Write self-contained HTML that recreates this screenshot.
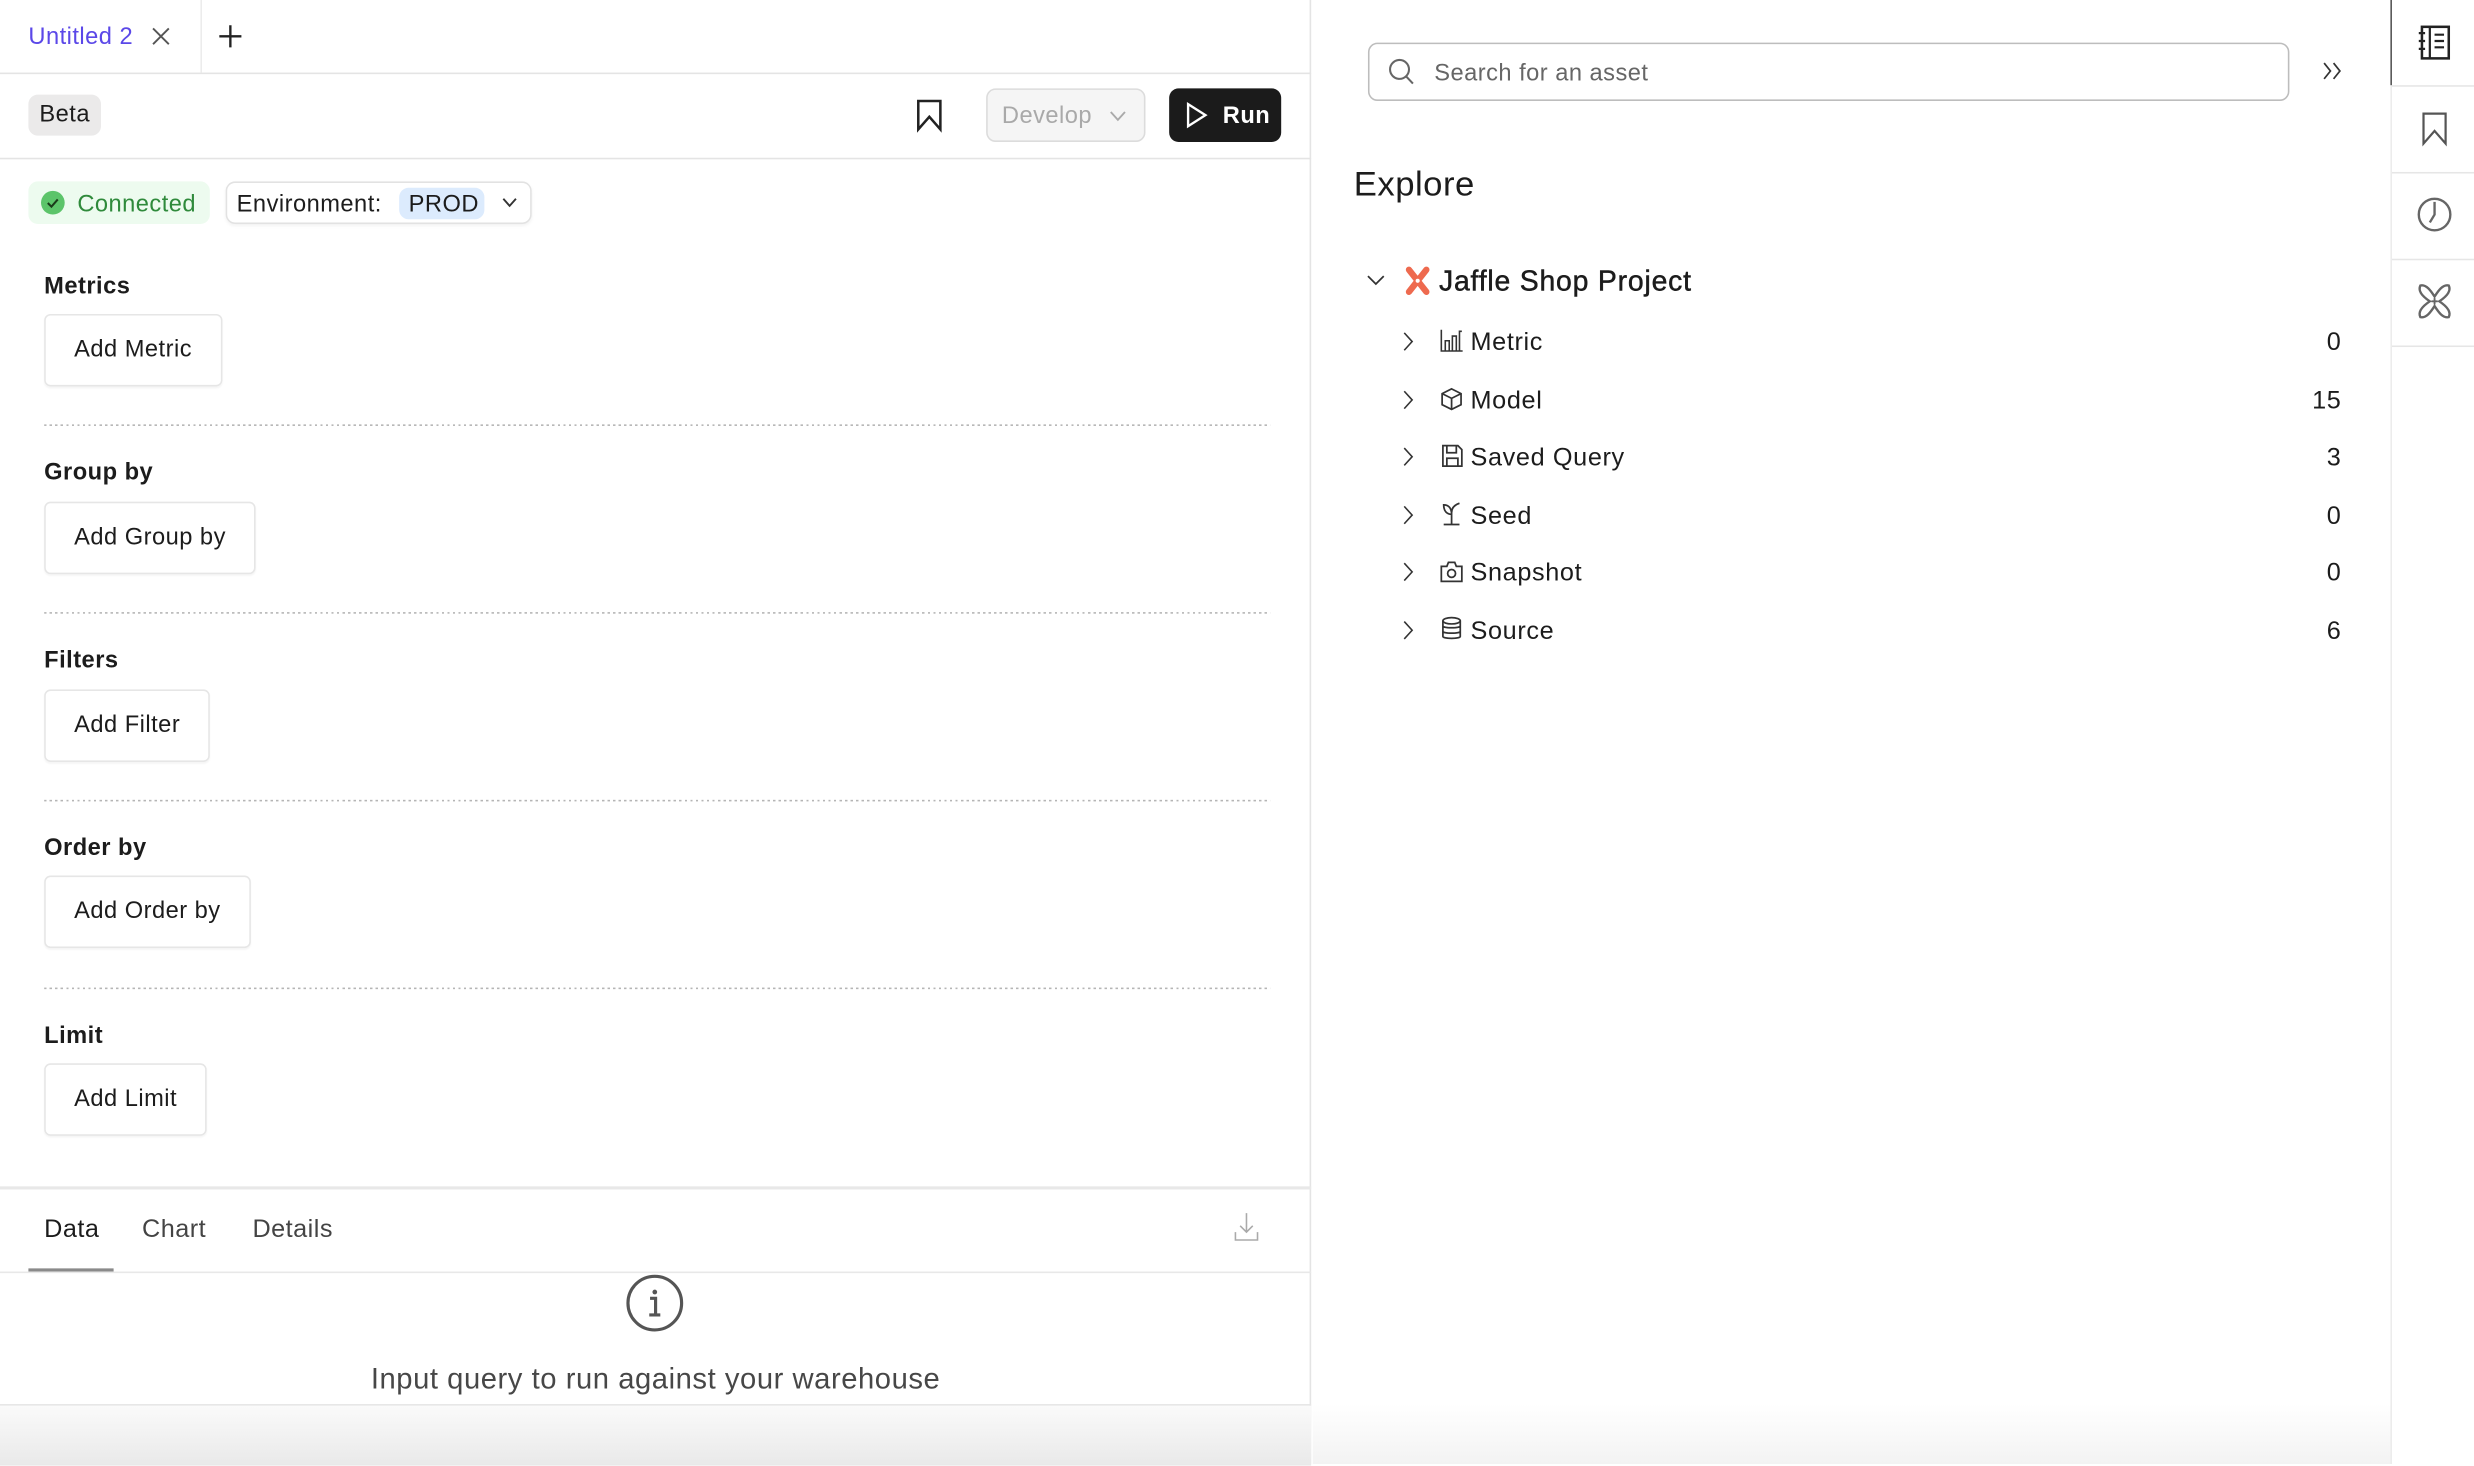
<!DOCTYPE html>
<html><head><meta charset="utf-8"><style>
html,body{margin:0;padding:0;width:2474px;height:1464px;overflow:hidden;background:#fff}
#w{position:absolute;left:0;top:0;width:1568px;height:928px;transform:scale(1.57781,1.57759);transform-origin:0 0;font-family:"Liberation Sans",sans-serif;color:#1c1c1c;letter-spacing:.3px}
.a{position:absolute}
.t{position:absolute;white-space:nowrap;line-height:1}
.btn{position:absolute;left:28px;height:46px;border:1px solid #e6e6e6;border-radius:4px;box-sizing:border-box;font-size:15px;line-height:44px;padding:0 18px;box-shadow:0 1px 1px rgba(0,0,0,.04)}
.lbl{position:absolute;left:28px;font-size:15px;font-weight:bold;line-height:1}
.dot{position:absolute;left:28px;width:777px;height:1px;background:repeating-linear-gradient(90deg,#b5b5b5 0 1.5px,transparent 1.5px 3.5px)}
.row{position:absolute;left:886px;width:598px;height:20px;font-size:16px;letter-spacing:.4px}
.row .n{position:absolute;left:46px;top:2px}
.row .c{position:absolute;right:0;top:2px}
svg{position:absolute;overflow:visible}
</style></head><body><div id="w">
<div class="a" style="left:0;top:0;width:831px;height:928px;border-right:1px solid #e4e4e4;box-sizing:border-box"></div>
<div class="a" style="left:0;top:46px;width:831px;border-top:1px solid #e4e4e4"></div>
<div class="a" style="left:127px;top:0;height:46px;border-left:1px solid #ececec"></div>
<div class="t" style="left:18px;top:16px;font-size:15px;color:#5b48e8">Untitled 2</div>
<svg style="left:97px;top:18px" width="10" height="10"><path d="M0 0L10 10M10 0L0 10" stroke="#555" stroke-width="1.2"/></svg>
<svg style="left:139px;top:16px" width="14" height="14"><path d="M7 0V14M0 7H14" stroke="#222" stroke-width="1.5"/></svg>
<div class="a" style="left:0;top:100px;width:831px;border-top:1px solid #e4e4e4"></div>
<div class="t" style="left:18px;top:60px;width:46px;height:26px;background:#ebeaea;border-radius:6px;font-size:15px;line-height:26px;text-align:center">Beta</div>
<svg style="left:581px;top:63px" width="16" height="20"><path d="M1 1H15V19L8 11L1 19Z" fill="none" stroke="#222" stroke-width="1.6"/></svg>
<div class="a" style="left:625px;top:56px;width:101px;height:34px;border:1px solid #dcdcdc;background:#f5f5f5;border-radius:6px;box-sizing:border-box"></div>
<div class="t" style="left:635px;top:66px;font-size:15px;color:#a9a9a9">Develop</div>
<svg style="left:704px;top:71px" width="9" height="6"><path d="M0 0L4.5 5L9 0" fill="none" stroke="#aaa" stroke-width="1.2"/></svg>
<div class="a" style="left:741px;top:56px;width:71px;height:34px;background:#1b1b1b;border-radius:6px"></div>
<svg style="left:752px;top:65px" width="13" height="16"><path d="M1 1L12 8L1 15Z" fill="none" stroke="#fff" stroke-width="1.5"/></svg>
<div class="t" style="left:775px;top:66px;font-size:15px;color:#fff;font-weight:bold">Run</div>
<div class="a" style="left:18px;top:115px;width:115px;height:27px;background:#edfbef;border-radius:6px"></div>
<svg style="left:26px;top:121px" width="15" height="15"><circle cx="7.5" cy="7.5" r="7.5" fill="#5cc46a"/><path d="M4.3 7.7L6.6 10L10.6 5.4" fill="none" stroke="#1a3a1a" stroke-width="1.3"/></svg>
<div class="t" style="left:49px;top:122px;font-size:15px;color:#2f8a3b">Connected</div>
<div class="a" style="left:143px;top:115px;width:194px;height:27px;border:1px solid #e2e2e2;border-radius:6px;box-sizing:border-box;box-shadow:0 1px 2px rgba(0,0,0,.05)"></div>
<div class="t" style="left:150px;top:122px;font-size:15px">Environment:</div>
<div class="a" style="left:253px;top:119px;width:54px;height:20px;background:#dcebfd;border-radius:6px"></div>
<div class="t" style="left:259px;top:122px;font-size:15px">PROD</div>
<svg style="left:319px;top:126px" width="8" height="5"><path d="M0 0L4 4.5L8 0" fill="none" stroke="#333" stroke-width="1.2"/></svg>
<div class="lbl" style="top:174px">Metrics</div>
<div class="btn" style="top:199px">Add Metric</div>
<div class="dot" style="top:269px"></div>
<div class="lbl" style="top:292px">Group by</div>
<div class="btn" style="top:318px">Add Group by</div>
<div class="dot" style="top:388px"></div>
<div class="lbl" style="top:411px">Filters</div>
<div class="btn" style="top:437px">Add Filter</div>
<div class="dot" style="top:507px"></div>
<div class="lbl" style="top:530px">Order by</div>
<div class="btn" style="top:555px">Add Order by</div>
<div class="dot" style="top:626px"></div>
<div class="lbl" style="top:649px">Limit</div>
<div class="btn" style="top:674px">Add Limit</div>
<div class="a" style="left:0;top:752px;width:831px;border-top:2px solid #e8e8e8"></div>
<div class="t" style="left:28px;top:772px;font-size:16px">Data</div>
<div class="t" style="left:90px;top:772px;font-size:16px;color:#444">Chart</div>
<div class="t" style="left:160px;top:772px;font-size:16px;color:#444">Details</div>
<div class="a" style="left:18px;top:804px;width:54px;height:2px;background:#8a8a8a"></div>
<div class="a" style="left:0;top:806px;width:831px;border-top:1px solid #e8e8e8"></div>
<svg style="left:782px;top:769px" width="16" height="18"><path d="M8 0V12M4 8L8 12L12 8M1 12V17H15V12" fill="none" stroke="#aaa" stroke-width="1"/></svg>
<svg style="left:397px;top:808px" width="36" height="36"><circle cx="18" cy="18" r="17" fill="none" stroke="#555" stroke-width="2"/><circle cx="18" cy="11" r="1.5" fill="#555"/><path d="M15 15H18.5V25M14.5 25.5H21.5" fill="none" stroke="#555" stroke-width="2"/></svg>
<div class="t" style="left:0;width:831px;text-align:center;top:865px;font-size:18.5px;color:#474747;letter-spacing:.35px">Input query to run against your warehouse</div>
<div class="a" style="left:0;top:890px;width:831px;height:38px;border-top:1px solid #e6e6e6;background:linear-gradient(#fafafa,#e9e9e9)"></div>
<div class="a" style="left:832px;top:890px;width:684px;height:38px;background:linear-gradient(#fff,#f3f3f3)"></div>
<div class="a" style="left:867px;top:27px;width:584px;height:37px;border:1px solid #bdbdbd;border-radius:6px;box-sizing:border-box"></div>
<svg style="left:880px;top:37px" width="16" height="17"><circle cx="7" cy="7" r="6" fill="none" stroke="#666" stroke-width="1.3"/><path d="M11.3 11.5L15.5 16" stroke="#666" stroke-width="1.3"/></svg>
<div class="t" style="left:909px;top:39px;font-size:15px;color:#666">Search for an asset</div>
<svg style="left:1472px;top:40px" width="13" height="10"><path d="M1 0L5 5L1 10M7 0L11 5L7 10" fill="none" stroke="#333" stroke-width="1.1"/></svg>
<div class="t" style="left:858px;top:106px;font-size:22px">Explore</div>
<svg style="left:867px;top:175px" width="10" height="6"><path d="M0 0L5 5L10 0" fill="none" stroke="#333" stroke-width="1.1"/></svg>
<svg style="left:891px;top:170px" width="15" height="16"><path d="M2 1L13 15M13 1L2 15" stroke="#ee6a4f" stroke-width="4" stroke-linecap="round"/><circle cx="7.5" cy="8" r="1.3" fill="#fff"/></svg>
<div class="t" style="left:912px;top:169px;font-size:18px;letter-spacing:.5px;-webkit-text-stroke:.3px #1c1c1c">Jaffle Shop Project</div>
<div class="row" style="top:207px"><svg style="left:4px;top:4px" width="6" height="11"><path d="M0 0L5 5.5L0 11" fill="none" stroke="#333" stroke-width="1"/></svg><svg style="left:27px;top:2px" width="14" height="14"><path d="M0.5 0V13.5H14M3 13V7H5.5V13M7.5 13V4H10V13M12 13V1H13.5" fill="none" stroke="#333" stroke-width="1"/></svg><span class="n">Metric</span><span class="c">0</span></div>
<div class="row" style="top:244px"><svg style="left:4px;top:4px" width="6" height="11"><path d="M0 0L5 5.5L0 11" fill="none" stroke="#333" stroke-width="1"/></svg><svg style="left:27px;top:2px" width="14" height="14"><path d="M7 0.5L13 3.5V10.5L7 13.5L1 10.5V3.5ZM1 3.5L7 6.5L13 3.5M7 6.5V13.5" fill="none" stroke="#333" stroke-width="1.1"/></svg><span class="n">Model</span><span class="c">15</span></div>
<div class="row" style="top:280px"><svg style="left:4px;top:4px" width="6" height="11"><path d="M0 0L5 5.5L0 11" fill="none" stroke="#333" stroke-width="1"/></svg><svg style="left:28px;top:2px" width="13" height="14"><path d="M0.5 0.5H10L12.5 3V13.5H0.5ZM3 0.5V5H9V0.5M3 13.5V8.5H10V13.5" fill="none" stroke="#333" stroke-width="1.1"/></svg><span class="n">Saved Query</span><span class="c">3</span></div>
<div class="row" style="top:317px"><svg style="left:4px;top:4px" width="6" height="11"><path d="M0 0L5 5.5L0 11" fill="none" stroke="#333" stroke-width="1"/></svg><svg style="left:27px;top:1px" width="14" height="15"><path d="M7 15V6M7 8C4 8 2 6 2 2C5 2 7 4 7 8M7 7C7 4 9 2 12 1M2 14.5H12" fill="none" stroke="#333" stroke-width="1.1"/></svg><span class="n">Seed</span><span class="c">0</span></div>
<div class="row" style="top:353px"><svg style="left:4px;top:4px" width="6" height="11"><path d="M0 0L5 5.5L0 11" fill="none" stroke="#333" stroke-width="1"/></svg><svg style="left:27px;top:3px" width="14" height="13"><path d="M0.5 3H4L5 0.5H9L10 3H13.5V12.5H0.5Z" fill="none" stroke="#333" stroke-width="1.1"/><circle cx="7" cy="7.5" r="2.5" fill="none" stroke="#333" stroke-width="1.1"/></svg><span class="n">Snapshot</span><span class="c">0</span></div>
<div class="row" style="top:390px"><svg style="left:4px;top:4px" width="6" height="11"><path d="M0 0L5 5.5L0 11" fill="none" stroke="#333" stroke-width="1"/></svg><svg style="left:28px;top:1px" width="12" height="15"><ellipse cx="6" cy="2.5" rx="5.5" ry="2" fill="none" stroke="#333" stroke-width="1.1"/><path d="M0.5 2.5V12.5C0.5 14 11.5 14 11.5 12.5V2.5M0.5 5.8C0.5 7.3 11.5 7.3 11.5 5.8M0.5 9.2C0.5 10.7 11.5 10.7 11.5 9.2" fill="none" stroke="#333" stroke-width="1.1"/></svg><span class="n">Source</span><span class="c">6</span></div>
<div class="a" style="left:1515px;top:54px;width:53px;height:874px;border-left:1px solid #ececec"></div>
<div class="a" style="left:1515px;top:0;height:54px;border-left:1px solid #555"></div>
<div class="a" style="left:1516px;top:54px;width:52px;border-top:1px solid #e6e6e6"></div>
<div class="a" style="left:1516px;top:109px;width:52px;border-top:1px solid #e6e6e6"></div>
<div class="a" style="left:1516px;top:164px;width:52px;border-top:1px solid #e6e6e6"></div>
<div class="a" style="left:1516px;top:219px;width:52px;border-top:1px solid #e6e6e6"></div>
<svg style="left:1533px;top:16px" width="20" height="22"><rect x="2" y="1" width="17" height="20" fill="none" stroke="#222" stroke-width="1.6"/><path d="M7 1V21M10 6H16M10 10H16M10 14H16M0 5H4M0 10H4M0 15H4" stroke="#222" stroke-width="1.4"/></svg>
<svg style="left:1535px;top:71px" width="16" height="21"><path d="M1 1H15V20L8 12L1 20Z" fill="none" stroke="#555" stroke-width="1.4"/></svg>
<svg style="left:1532px;top:125px" width="22" height="22"><circle cx="11" cy="11" r="10" fill="none" stroke="#666" stroke-width="1.5"/><path d="M11 3V11L8 16" fill="none" stroke="#666" stroke-width="1.5"/></svg>
<svg style="left:1531px;top:179px" width="24" height="24"><path d="M3 2C7 1 10 6 12 9C14 6 17 1 21 2C23 6 18 10 15 12C18 14 23 18 21 22C17 23 14 18 12 15C10 18 7 23 3 22C1 18 6 14 9 12C6 10 1 6 3 2Z" fill="none" stroke="#666" stroke-width="1.5"/><path d="M12 10V14M10 12H14" stroke="#666" stroke-width="1.2"/></svg>
</div></body></html>
